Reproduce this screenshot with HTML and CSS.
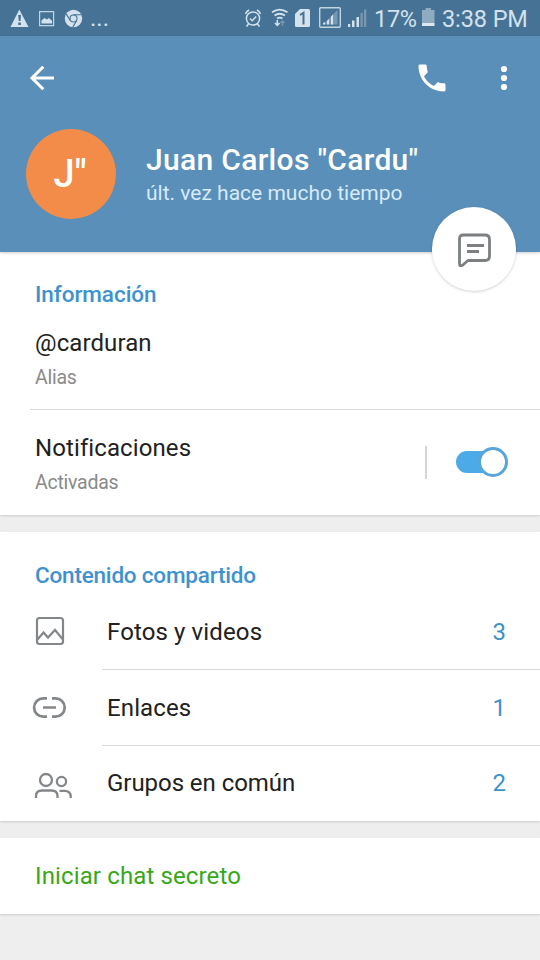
FILE: index.html
```html
<!DOCTYPE html>
<html lang="es">
<head>
<meta charset="utf-8">
<title>Juan Carlos "Cardu"</title>
<link rel="stylesheet" href="styles.css">
</head>
<body>
<div class="status">
  <svg class="status-left" width="84" height="36" viewBox="0 0 84 36">
    <path d="M19.300 9.500L28.500 27H10.500Z" fill="#d3e2ec" stroke-linejoin="round"/>
    <path d="M18.200 15h2.800l-.5 6h-1.800zM18.300 22.500h2.600V25h-2.600z" fill="#467395"/>
    <path d="M39.600 11.600h14v14h-14z" fill="none" stroke="#c2d5e2" stroke-width="1.200"/>
    <path d="M41.500 23.500v-3l3-2.500 2.500 1.500 1.800-1.500 3.200 2.800v2.700z" fill="#d3e2ec"/>
    <circle cx="73.500" cy="18.500" r="8.700" fill="#d3e2ec"/>
    <circle cx="73.500" cy="18.500" r="3.500" fill="#d3e2ec" stroke="#467395" stroke-width="1.100"/>
    <path d="M73.500 14.700h7.700M70.200 20.500l-4-6.600M76.700 20.500l-3.900 6.600" stroke="#467395" stroke-width="1.100"/>
  </svg>
  <span class="dots">...</span>
  <svg class="status-icons" width="124" height="36" viewBox="244 0 124 36" fill="none">
    <g stroke="#d3e2ec" stroke-width="1.500">
      <circle cx="253" cy="18.500" r="6.600"/>
      <path d="M245.500 14a8 8 0 0 1 3.500-4M257 10a8 8 0 0 1 3.500 4M248.500 24l-2 2.500M257.500 24l2 2.500M250 18.500l2.200 2.200 4-4.200"/>
      <path d="M272 12.300q7.500-5.500 15.500 0M274.500 15.500q5-3.500 10.500 0M277 18.500q2.800-1.900 5.500 0" stroke-width="1.800"/>
      <path d="M277.300 20v5M275 23l2.300 2.500 2.300-2.500"/>
      <path d="M282.500 26v-5M280.500 23l2-2 2 2" stroke="#7698b2" stroke-width="1.300"/>
    </g>
    <path d="M300 9h8.500q1.500 0 1.500 1.500v15q0 1.500-1.500 1.500h-12q-1.500 0-1.500-1.500V14z" fill="#d3e2ec"/>
    <path d="M300 15l3.500-2.200v11.700" stroke="#467395" stroke-width="2"/>
    <rect x="319.700" y="7.700" width="20.600" height="19.600" rx="1" stroke="#c2d5e2" stroke-width="1.400"/>
    <path d="M323 24.500L337.500 10v14.500z" fill="#7698b2"/>
    <path d="M323 24.500v-1.500l2-1v2.500zM327 24.500V21l2-2v5.500zM331 24.500v-8l2-2v10z" fill="#d3e2ec"/>
    <path d="M348 24h2.200v3H348zM352 20.500h2.500V27H352zM356.500 17h2.500v10h-2.500z" fill="#d3e2ec"/>
    <path d="M360.500 13h2.300v14h-2.300zM364 9.500h2.300V27H364z" fill="#7698b2"/>
  </svg>
  <span class="battery-text">17%</span>
  <svg class="battery" width="13" height="36" viewBox="422 0 13 36">
    <path d="M422 10h3.500V8h5.500v2h3.500v13H422z" fill="#8eabc0"/>
    <path d="M422 23h12.500v3H422z" fill="#dce8f0"/>
  </svg>
  <span class="clock">3:38 PM</span>
</div>

<header class="header">
  <div class="toolbar">
    <svg width="26" height="26" viewBox="0 0 26 26" fill="none" stroke="#fff" stroke-width="3"><path d="M25 13H3M14.300 1.800L3 13l11.300 11.200"/></svg>
    <svg class="call" width="36" height="36" viewBox="0 0 24 24" fill="#fff"><path d="M6.620 10.790c1.440 2.830 3.760 5.140 6.590 6.590l2.200-2.200c.27-.27.670-.36 1.020-.24 1.120.37 2.330.57 3.570.57.550 0 1 .45 1 1V20c0 .550-.45 1-1 1-9.390 0-17-7.610-17-17 0-.55.450-1 1-1h3.500c.550 0 1 .450 1 1 0 1.250.2 2.450.57 3.570.11.350.03.740-.25 1.020z"/></svg>
    <svg width="8" height="26" viewBox="0 0 8 26" fill="#fff"><circle cx="4" cy="4" r="3.100"/><circle cx="4" cy="13" r="3.100"/><circle cx="4" cy="22" r="3.100"/></svg>
  </div>
  <div class="profile">
    <div class="avatar"><span>J"</span></div>
    <div class="names">
      <h1><span>Juan Carlos "Cardu"</span></h1>
      <p><span>últ. vez hace mucho tiempo</span></p>
    </div>
  </div>
  <div class="message">
    <svg width="36" height="36" viewBox="0 0 36 36" fill="none" stroke="#7d8082" stroke-width="2.800" stroke-linejoin="round"><path d="M7.500 4H29Q33.500 4 33.500 8.500V25Q33.500 29.500 29 29.500H12L6.500 34.300Q3.500 36 3.500 32.500V8Q3.500 4 7.500 4Z"/><path d="M11 14.500H28M11 20.500H23"/></svg>
  </div>
</header>

<section class="card info">
  <h2><span>Información</span></h2>
  <div class="row alias"><span class="main">@carduran</span><span class="sub">Alias</span></div>
  <div class="row notify">
    <div class="labels"><span class="main">Notificaciones</span><span class="sub">Activadas</span></div>
    <div class="separator"></div>
    <div class="switch"><div class="knob"></div></div>
  </div>
</section>

<section class="card shared">
  <h2 class="tight"><span>Contenido compartido</span></h2>
  <div class="item">
    <svg width="42" height="40" viewBox="31 612 42 40" fill="none" stroke="#84878a" stroke-width="2.200"><rect x="37" y="618" width="26" height="26" rx="2.500"/><path d="M37.500 639.500L43.500 632.500L48 637.500L55 630L62.500 639" stroke-width="2.200"/></svg>
    <div class="line"><span>Fotos y videos</span><b>3</b></div>
  </div>
  <div class="item">
    <svg width="42" height="40" viewBox="31 688 42 40" fill="none" stroke="#84878a" stroke-width="2.700"><path d="M47 698.300H43.300A9.200 9.200 0 0 0 43.300 716.700H47M52 698.300H55.500A9.200 9.200 0 0 1 55.500 716.700H52M43 707.500H56"/></svg>
    <div class="line"><span>Enlaces</span><b>1</b></div>
  </div>
  <div class="item">
    <svg width="42" height="40" viewBox="31 763 42 40" fill="none" stroke="#84878a" stroke-width="2.300"><circle cx="46" cy="780" r="6"/><circle cx="61.500" cy="781.500" r="4.600"/><path d="M36 798V796Q36 790.500 42 790.500H51.500Q57.500 790.500 57.500 796V798M59.500 790.800H64.500Q70.700 790.800 70.700 796.500V798"/></svg>
    <div class="line"><span class="groups">Grupos en común</span><b>2</b></div>
  </div>
</section>

<section class="card secret"><span>Iniciar chat secreto</span></section>
</body>
</html>
```
FILE: styles.css
```css
* { box-sizing: border-box; }
body {
  margin: 0;
  width: 540px;
  height: 960px;
  overflow: hidden;
  background: #eeeeee;
  color: #212121;
  font: 24px/30px Roboto, "Liberation Sans", sans-serif;
}
svg { display: block; flex: none; }
h1, h2, p { margin: 0; }
.status {
  display: flex;
  height: 36px;
  background: #467395;
  color: #d3e2ec;
  line-height: 38px;
  white-space: nowrap;
}
.dots { margin-left: 6px; width: 154px; font-size: 24px; line-height: 36px; }
.battery-text { margin-left: 6px; width: 48px; font-size: 23.500px; letter-spacing: -.3px; }
.clock { margin-left: 7px; font-size: 23.500px; letter-spacing: -.1px; }
.header {
  position: relative;
  height: 216px;
  background: #598fb9;
  color: #fff;
  box-shadow: 0 1px 3px rgba(0, 0, 0, .2);
}
.toolbar {
  display: flex;
  align-items: center;
  height: 84px;
  padding: 0 32px 0 29px;
}
.call { margin-left: auto; margin-right: 50px; }
.profile { display: flex; padding: 9px 0 0 26px; }
.avatar {
  width: 90px;
  height: 90px;
  border-radius: 50%;
  background: #f28c48;
  text-align: center;
  font-size: 38px;
  font-weight: 500;
  line-height: 90px;
}
.avatar span { margin-right: 2px; }
.names { margin-left: 30px; padding-top: 15px; white-space: nowrap; }
.names h1 { font-size: 30px; font-weight: 500; line-height: 32px; letter-spacing: .32px; }
.names p { font-size: 21px; line-height: 34px; color: #d7eafa; }
.message {
  position: absolute;
  right: 24px;
  bottom: -39px;
  display: flex;
  align-items: center;
  justify-content: center;
  width: 84px;
  height: 84px;
  border-radius: 50%;
  background: #fff;
  box-shadow: 0 1px 3px rgba(0, 0, 0, .18);
}
.card { background: #fff; box-shadow: 0 1px 2px rgba(0, 0, 0, .15); }
h2 { padding-left: 35px; color: #3e92cf; font-size: 22.500px; font-weight: 500; line-height: 30px; letter-spacing: -.05px; }
.tight { letter-spacing: -.2px; }
.info { height: 263px; padding-top: 27px; }
.main, .sub { display: block; width: max-content; }
.main { letter-spacing: .1px; }
.sub { color: #8a8a8a; font-size: 19.500px; line-height: 39px; letter-spacing: -.25px; }
.alias { margin-left: 30px; padding: 19px 0 0 5px; border-bottom: 1px solid #d9d9d9; height: 101px; }
.notify { display: flex; align-items: center; height: 105px; padding: 0 32px 0 35px; }
.labels { padding-top: 10px; }
.separator { width: 2px; height: 33px; margin-left: auto; background: #d5d5d5; }
.switch {
  display: flex;
  align-items: center;
  justify-content: flex-end;
  width: 52px;
  height: 22px;
  margin: 0 0 1px 29px;
  border-radius: 11px;
  background: linear-gradient(90deg, #4daae8 75%, transparent 75%);
}
.knob { flex: none; width: 30px; height: 30px; border: 3px solid #58a5da; border-radius: 50%; background: #fff; }
.shared { height: 289px; margin-top: 17px; padding-top: 28px; }
.item { display: flex; align-items: center; padding-left: 31px; }
.line {
  display: flex;
  flex: 1;
  align-items: center;
  justify-content: space-between;
  height: 76px;
  margin-left: 29px;
  padding: 0 34px 0 5px;
  border-bottom: 1px solid #d9d9d9;
  letter-spacing: .12px;
}
.groups { letter-spacing: -.05px; }
.shared h2 + .item { margin-top: 4px; }
.item:last-child { height: 74px; }
.item:last-child .line { height: 74px; border: 0; }
.line b { color: #3e92c5; font-weight: 400; }
.secret { height: 76px; margin-top: 17px; padding-left: 35px; line-height: 76px; letter-spacing: .13px; color: #37a818; }
```
